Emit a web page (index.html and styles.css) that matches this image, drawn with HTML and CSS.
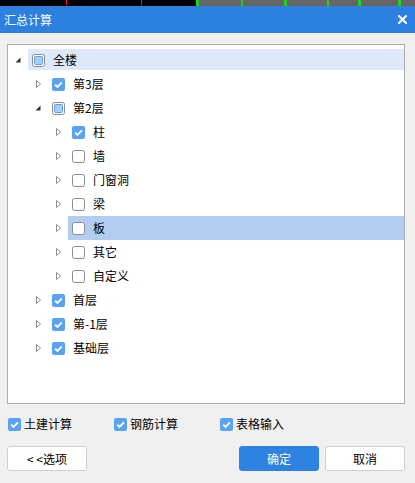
FILE: index.html
```html
<!DOCTYPE html>
<html lang="zh">
<head>
<meta charset="utf-8">
<title>汇总计算</title>
<link rel="stylesheet" href="styles.css">
</head>
<body>
<div class="strip"></div>
<div class="titlebar">
  <span class="title">汇总计算</span>
  <svg class="close" width="9" height="9" viewBox="0 0 9 9"><path d="M1 1L8 8M8 1L1 8" stroke="#fff" stroke-width="2" stroke-linecap="square"/></svg>
</div>
<div class="tree">
  <div class="row lvl0 hover">
    <svg class="arrow" width="20" height="24" viewBox="0 0 20 24"><polygon points="12.5,9.5 12.5,14.5 7.5,14.5" fill="#333"/></svg>
    <div class="node">
      <svg class="cb" width="13" height="13" viewBox="0 0 13 13"><rect x="0.5" y="0.5" width="12" height="12" rx="2" fill="#fff" stroke="#8a8a8a"/><rect x="2.5" y="2.5" width="8" height="8" rx="1" fill="#a8cdf8" stroke="#5f9de8"/></svg>
      <span class="label">全楼</span>
    </div>
  </div>
  <div class="row lvl1">
    <svg class="arrow" width="20" height="24" viewBox="0 0 20 24"><polygon points="8.5,8.5 12.5,12 8.5,15.5" fill="none" stroke="#8a8a8a"/></svg>
    <div class="node">
      <svg class="cb" width="13" height="13" viewBox="0 0 13 13"><rect width="13" height="13" rx="2" fill="#5aa2f3"/><polyline points="3.2,6.6 5.5,8.9 9.9,4.4" fill="none" stroke="#fff" stroke-width="1.8"/></svg>
      <span class="label">第3层</span>
    </div>
  </div>
  <div class="row lvl1">
    <svg class="arrow" width="20" height="24" viewBox="0 0 20 24"><polygon points="12.5,9.5 12.5,14.5 7.5,14.5" fill="#333"/></svg>
    <div class="node">
      <svg class="cb" width="13" height="13" viewBox="0 0 13 13"><rect x="0.5" y="0.5" width="12" height="12" rx="2" fill="#fff" stroke="#8a8a8a"/><rect x="2.5" y="2.5" width="8" height="8" rx="1" fill="#a8cdf8" stroke="#5f9de8"/></svg>
      <span class="label">第2层</span>
    </div>
  </div>
  <div class="row lvl2">
    <svg class="arrow" width="20" height="24" viewBox="0 0 20 24"><polygon points="8.5,8.5 12.5,12 8.5,15.5" fill="none" stroke="#8a8a8a"/></svg>
    <div class="node">
      <svg class="cb" width="13" height="13" viewBox="0 0 13 13"><rect width="13" height="13" rx="2" fill="#5aa2f3"/><polyline points="3.2,6.6 5.5,8.9 9.9,4.4" fill="none" stroke="#fff" stroke-width="1.8"/></svg>
      <span class="label">柱</span>
    </div>
  </div>
  <div class="row lvl2">
    <svg class="arrow" width="20" height="24" viewBox="0 0 20 24"><polygon points="8.5,8.5 12.5,12 8.5,15.5" fill="none" stroke="#8a8a8a"/></svg>
    <div class="node">
      <svg class="cb" width="13" height="13" viewBox="0 0 13 13"><rect x="0.5" y="0.5" width="12" height="12" rx="2" fill="#fff" stroke="#8a8a8a"/></svg>
      <span class="label">墙</span>
    </div>
  </div>
  <div class="row lvl2">
    <svg class="arrow" width="20" height="24" viewBox="0 0 20 24"><polygon points="8.5,8.5 12.5,12 8.5,15.5" fill="none" stroke="#8a8a8a"/></svg>
    <div class="node">
      <svg class="cb" width="13" height="13" viewBox="0 0 13 13"><rect x="0.5" y="0.5" width="12" height="12" rx="2" fill="#fff" stroke="#8a8a8a"/></svg>
      <span class="label">门窗洞</span>
    </div>
  </div>
  <div class="row lvl2">
    <svg class="arrow" width="20" height="24" viewBox="0 0 20 24"><polygon points="8.5,8.5 12.5,12 8.5,15.5" fill="none" stroke="#8a8a8a"/></svg>
    <div class="node">
      <svg class="cb" width="13" height="13" viewBox="0 0 13 13"><rect x="0.5" y="0.5" width="12" height="12" rx="2" fill="#fff" stroke="#8a8a8a"/></svg>
      <span class="label">梁</span>
    </div>
  </div>
  <div class="row lvl2 selected">
    <svg class="arrow" width="20" height="24" viewBox="0 0 20 24"><polygon points="8.5,8.5 12.5,12 8.5,15.5" fill="none" stroke="#8a8a8a"/></svg>
    <div class="node">
      <svg class="cb" width="13" height="13" viewBox="0 0 13 13"><rect x="0.5" y="0.5" width="12" height="12" rx="2" fill="#fff" stroke="#8a8a8a"/></svg>
      <span class="label">板</span>
    </div>
  </div>
  <div class="row lvl2">
    <svg class="arrow" width="20" height="24" viewBox="0 0 20 24"><polygon points="8.5,8.5 12.5,12 8.5,15.5" fill="none" stroke="#8a8a8a"/></svg>
    <div class="node">
      <svg class="cb" width="13" height="13" viewBox="0 0 13 13"><rect x="0.5" y="0.5" width="12" height="12" rx="2" fill="#fff" stroke="#8a8a8a"/></svg>
      <span class="label">其它</span>
    </div>
  </div>
  <div class="row lvl2">
    <svg class="arrow" width="20" height="24" viewBox="0 0 20 24"><polygon points="8.5,8.5 12.5,12 8.5,15.5" fill="none" stroke="#8a8a8a"/></svg>
    <div class="node">
      <svg class="cb" width="13" height="13" viewBox="0 0 13 13"><rect x="0.5" y="0.5" width="12" height="12" rx="2" fill="#fff" stroke="#8a8a8a"/></svg>
      <span class="label">自定义</span>
    </div>
  </div>
  <div class="row lvl1">
    <svg class="arrow" width="20" height="24" viewBox="0 0 20 24"><polygon points="8.5,8.5 12.5,12 8.5,15.5" fill="none" stroke="#8a8a8a"/></svg>
    <div class="node">
      <svg class="cb" width="13" height="13" viewBox="0 0 13 13"><rect width="13" height="13" rx="2" fill="#5aa2f3"/><polyline points="3.2,6.6 5.5,8.9 9.9,4.4" fill="none" stroke="#fff" stroke-width="1.8"/></svg>
      <span class="label">首层</span>
    </div>
  </div>
  <div class="row lvl1">
    <svg class="arrow" width="20" height="24" viewBox="0 0 20 24"><polygon points="8.5,8.5 12.5,12 8.5,15.5" fill="none" stroke="#8a8a8a"/></svg>
    <div class="node">
      <svg class="cb" width="13" height="13" viewBox="0 0 13 13"><rect width="13" height="13" rx="2" fill="#5aa2f3"/><polyline points="3.2,6.6 5.5,8.9 9.9,4.4" fill="none" stroke="#fff" stroke-width="1.8"/></svg>
      <span class="label">第-1层</span>
    </div>
  </div>
  <div class="row lvl1">
    <svg class="arrow" width="20" height="24" viewBox="0 0 20 24"><polygon points="8.5,8.5 12.5,12 8.5,15.5" fill="none" stroke="#8a8a8a"/></svg>
    <div class="node">
      <svg class="cb" width="13" height="13" viewBox="0 0 13 13"><rect width="13" height="13" rx="2" fill="#5aa2f3"/><polyline points="3.2,6.6 5.5,8.9 9.9,4.4" fill="none" stroke="#fff" stroke-width="1.8"/></svg>
      <span class="label">基础层</span>
    </div>
  </div>
</div>
<div class="options">
  <label class="opt">
    <svg class="cb" width="13" height="13" viewBox="0 0 13 13"><rect width="13" height="13" rx="2" fill="#5aa2f3"/><polyline points="3.2,6.6 5.5,8.9 9.9,4.4" fill="none" stroke="#fff" stroke-width="1.8"/></svg>
    <span>土建计算</span>
  </label>
  <label class="opt">
    <svg class="cb" width="13" height="13" viewBox="0 0 13 13"><rect width="13" height="13" rx="2" fill="#5aa2f3"/><polyline points="3.2,6.6 5.5,8.9 9.9,4.4" fill="none" stroke="#fff" stroke-width="1.8"/></svg>
    <span>钢筋计算</span>
  </label>
  <label class="opt">
    <svg class="cb" width="13" height="13" viewBox="0 0 13 13"><rect width="13" height="13" rx="2" fill="#5aa2f3"/><polyline points="3.2,6.6 5.5,8.9 9.9,4.4" fill="none" stroke="#fff" stroke-width="1.8"/></svg>
    <span>表格输入</span>
  </label>
</div>
<div class="buttons">
  <button class="btn">&lt; &lt;选项</button>
  <button class="btn primary push">确定</button>
  <button class="btn">取消</button>
</div>
</body>
</html>
```
FILE: styles.css
```css
html, body {
  margin: 0;
  padding: 0;
}
body {
  width: 415px;
  height: 483px;
  overflow: hidden;
  background: #f0f0f0;
  font-family: "Noto Sans CJK SC", "Noto Sans", sans-serif;
  font-size: 12px;
  color: #000;
}
.strip {
  height: 6px;
  background:
    linear-gradient(to right,
      #000 0, #000 66px, #f00 66px, #f00 67px, #000 67px,
      #000 141px, #f00 141px, #f00 142px, #000 142px,
      #000 196px, #22d022 196px, #22d022 199px, #666 199px,
      #666 241px, #22d022 241px, #22d022 243px, #666 243px,
      #666 284px, #22d022 284px, #22d022 287px, #666 287px,
      #666 327px, #22d022 327px, #22d022 329px, #666 329px,
      #666 358px, #22d022 358px, #22d022 361px, #666 361px,
      #666 398px, #22d022 398px, #22d022 401px, #666 401px);
}
.titlebar {
  height: 27px;
  background: #2c80e0;
  display: flex;
  align-items: center;
  justify-content: space-between;
  padding: 0 8px 0 4px;
  color: #fff;
}
.title {
  font-size: 12px;
  line-height: 1;
}
.close {
  display: block;
}
.tree {
  box-sizing: border-box;
  margin: 11px 10px 0 7px;
  height: 360px;
  border: 1px solid #acacac;
  background: #fff;
  padding-top: 3px;
}
.row {
  height: 24px;
  display: flex;
  align-items: stretch;
}
.lvl1 { padding-left: 20px; }
.lvl2 { padding-left: 40px; }
.arrow {
  display: block;
  flex: none;
}
.node {
  flex: 1;
  display: flex;
  align-items: center;
  padding-left: 4px;
}
.hover .node {
  background: linear-gradient(#dde9f9, #dde9f9) 0 1px / 100% 21px no-repeat;
}
.selected .node {
  background: #b2cdef;
}
.cb {
  display: block;
  flex: none;
}
.label {
  margin-left: 8px;
  line-height: 1;
}
.options {
  display: grid;
  grid-template-columns: 106px 106px 106px;
  padding-left: 8px;
  margin-top: 12px;
  height: 16px;
}
.opt {
  display: flex;
  align-items: center;
  gap: 3px;
  line-height: 1;
}
.buttons {
  display: flex;
  margin: 14px 10px 0 7px;
  gap: 6px;
}
.btn {
  box-sizing: border-box;
  width: 80px;
  height: 25px;
  border: 1px solid #cfcfcf;
  border-radius: 3px;
  background: #fff;
  font-family: inherit;
  font-size: 12px;
  color: #000;
  padding: 0;
}
.primary {
  background: #2e83e2;
  border-color: #2e83e2;
  color: #fff;
}
.push {
  margin-left: auto;
}
```
